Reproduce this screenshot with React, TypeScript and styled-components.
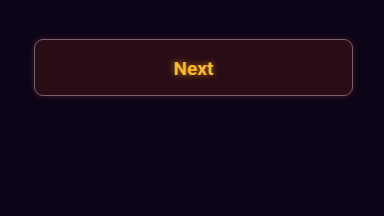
import styled, { createGlobalStyle } from "styled-components";

const GlobalStyle = createGlobalStyle`
	html, body {
		margin: 0;
		padding: 0;
		background: #0c0517;
	}
`;

const Page = styled.div`
	width: 384px;
	height: 216px;
	box-sizing: border-box;
	padding: 39px 31px 0 34px;
	background: #0c0517;
	font-family: Roboto, "Noto Sans", sans-serif;
`;

const NextButton = styled.button`
	display: flex;
	align-items: center;
	justify-content: center;
	width: 100%;
	height: 57px;
	box-sizing: border-box;
	padding: 2px 0 0;

	background: #280c16;
	border: 1.5px solid #7a606a;
	border-radius: 9px;
	box-shadow: 0 0 6px rgba(180, 60, 90, 0.3);

	color: #f8bb28;
	font-family: inherit;
	font-size: 19px;
	font-weight: 700;
	text-shadow: 0 0 7px rgba(247, 150, 30, 0.7);
	cursor: pointer;
`;

export default function App() {
	return (
		<>
			<GlobalStyle />
			<Page>
				<NextButton>Next</NextButton>
			</Page>
		</>
	);
}
